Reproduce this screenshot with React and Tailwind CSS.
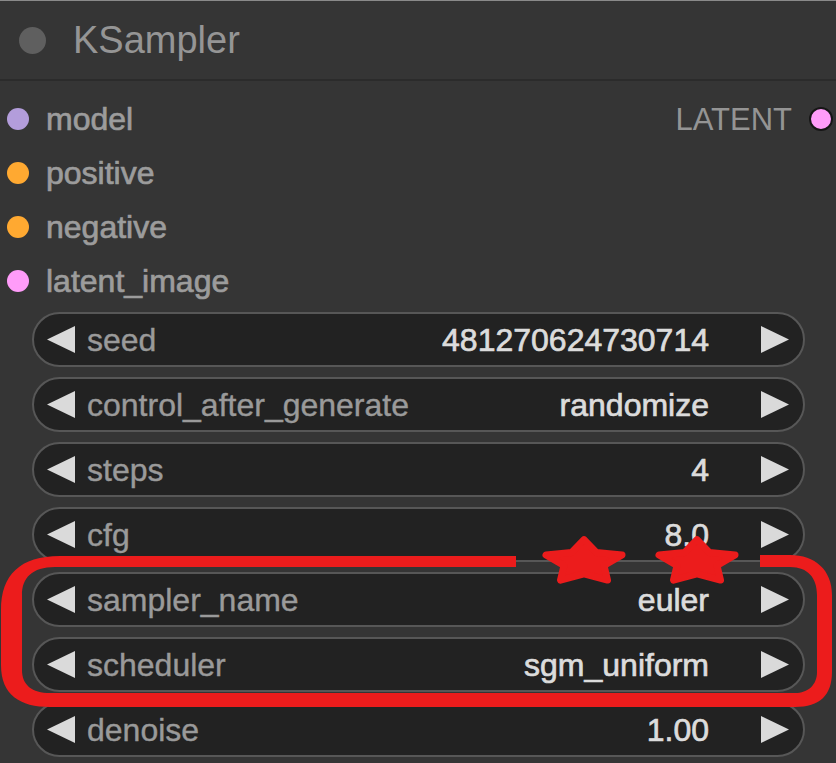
import React from "react";

function starPoints(cx, cy, R, r, sy) {
  const pts = [];
  for (let i = 0; i < 10; i++) {
    const ang = (-90 + i * 36) * Math.PI / 180;
    const rad = i % 2 === 0 ? R : r;
    pts.push(`${(cx + rad * Math.cos(ang)).toFixed(1)},${(cy + rad * Math.sin(ang) * sy).toFixed(1)}`);
  }
  return pts.join(" ");
}

const slots = [
  { name: "model", color: "bg-[#b39ddb]" },
  { name: "positive", color: "bg-[#ffa931]" },
  { name: "negative", color: "bg-[#ffa931]" },
  { name: "latent_image", color: "bg-[#ff9cf9]" },
];

const widgets = [
  ["seed", "481270624730714"],
  ["control_after_generate", "randomize"],
  ["steps", "4"],
  ["cfg", "8.0"],
  ["sampler_name", "euler"],
  ["scheduler", "sgm_uniform"],
  ["denoise", "1.00"],
];

function Widget({ label, value }) {
  return (
    <div className="h-[55px] rounded-full border-2 border-[#575757] bg-[#222222] flex items-center pl-[13px] pr-[14px]">
      <svg width="28" height="27" viewBox="0 0 28 27" className="shrink-0">
        <polygon points="0,13.5 28,0 28,27" fill="#dadada" />
      </svg>
      <span className="ml-[12px] text-[32px] leading-none text-[#9a9a9a] whitespace-nowrap [-webkit-text-stroke:0.4px_#9a9a9a]">{label}</span>
      <span className="ml-auto text-[32px] leading-none text-[#dcdcdc] whitespace-nowrap [-webkit-text-stroke:0.7px_#dcdcdc]">{value}</span>
      <svg width="28" height="27" viewBox="0 0 28 27" className="shrink-0 ml-[52px]">
        <polygon points="28,13.5 0,0 0,27" fill="#dadada" />
      </svg>
    </div>
  );
}

export default function App() {
  return (
    <div className="relative w-[836px] h-[763px] overflow-hidden bg-[#353535] font-['Liberation_Sans',Arial,sans-serif]">
      <div className="h-[81px] border-t border-t-[#8a8a8a] border-b-2 border-b-[#2b2b2b] flex items-center">
        <div className="ml-[19px] w-[27px] h-[27px] rounded-full bg-[#5f5f5f]" />
        <span className="ml-[27px] text-[38px] leading-none text-[#959595]">KSampler</span>
      </div>
      <div className="pt-[11px]">
        {slots.map((s, i) => (
          <div key={s.name} className="h-[54px] flex items-center">
            <div className={`ml-[7px] w-[22px] h-[22px] rounded-full ${s.color}`} />
            <span className="ml-[17px] text-[32px] leading-none text-[#9c9c9c] [-webkit-text-stroke:0.7px_#9c9c9c]">{s.name}</span>
            {i === 0 && (
              <div className="ml-auto flex items-center">
                <span className="text-[31px] leading-none text-[#949494]">LATENT</span>
                <div className="ml-[17px] mr-[3px] w-[24px] h-[24px] rounded-full bg-[#ff9cf9] border-2 border-[#161616]" />
              </div>
            )}
          </div>
        ))}
      </div>
      <div className="mt-[4px] pl-[32px] pr-[31px] flex flex-col gap-[10px]">
        {widgets.map(([l, v]) => (
          <Widget key={l} label={l} value={v} />
        ))}
      </div>
      <svg className="absolute left-0 top-0 pointer-events-none" width="836" height="763" viewBox="0 0 836 763">
        <path
          fill="#ec1c1c"
          d="M 516 556 L 60 556 C 20 556 1 575 1 610 L 1 665 C 1 695 20 707 50 707 L 795 707 C 820 707 832 695 832 672 L 832 595 C 832 570 815 555 790 555 L 760 555 L 760 567 L 790 567 C 808 567 817 578 817 595 L 817 672 C 817 685 808 693 795 693 L 50 693 C 32 693 22 685 22 670 L 22 595 C 22 578 32 567 55 567 L 516 567 Z"
        />
        <polygon points={starPoints(584, 562, 40, 21, 0.56)} fill="#ec1c1c" stroke="#ec1c1c" strokeWidth="7" strokeLinejoin="round" />
        <polygon points={starPoints(697, 562, 40, 21, 0.56)} fill="#ec1c1c" stroke="#ec1c1c" strokeWidth="7" strokeLinejoin="round" />
      </svg>
    </div>
  );
}
